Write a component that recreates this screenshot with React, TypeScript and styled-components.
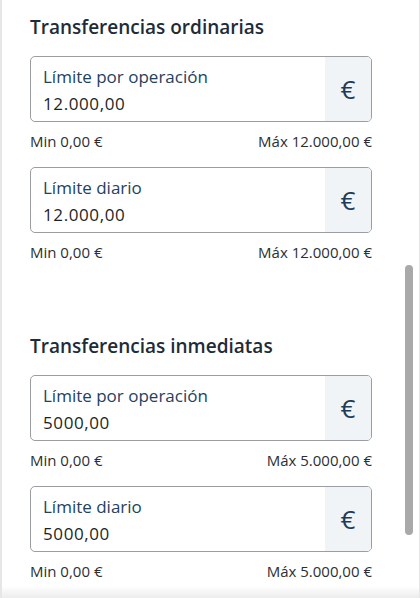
import React from "react";
import styled, { createGlobalStyle } from "styled-components";

const Global = createGlobalStyle`
  html, body { margin: 0; padding: 0; background: #ffffff; }
  body { font-family: "Open Sans", Roboto, sans-serif; }
  * { box-sizing: border-box; }
`;

const Frame = styled.div`
  position: relative;
  width: 420px;
  height: 598px;
  overflow: hidden;
  background: #ffffff;
  border-left: 2px solid #e4e6e8;
  border-right: 1px solid #e4e6e8;
`;

const Content = styled.div`
  display: flex;
  flex-direction: column;
  padding: 13px 0 0 28px;
  width: 370px;
`;

const Section = styled.section<{ $gap?: number }>`
  display: flex;
  flex-direction: column;
  margin-top: ${(p) => p.$gap ?? 0}px;
`;

const Heading = styled.h2`
  margin: 0 0 15px 0;
  font-size: 19px;
  line-height: 28px;
  font-weight: 600;
  color: #1e2b38;
`;

const Field = styled.div`
  display: flex;
  height: 66px;
  border: 1px solid #9a9ea3;
  border-radius: 5px;
  overflow: hidden;
`;

const FieldBody = styled.div`
  flex: 1;
  display: flex;
  flex-direction: column;
  justify-content: center;
  padding: 3px 0 0 12px;
  gap: 3px;
`;

const Label = styled.div`
  font-size: 17px;
  line-height: 24px;
  color: #234260;
`;

const Value = styled.div`
  font-size: 17px;
  line-height: 24px;
  letter-spacing: 0.6px;
  color: #1c1f23;
`;

const Currency = styled.div`
  width: 46px;
  display: flex;
  align-items: center;
  justify-content: center;
  background: #f0f4f7;
  font-size: 26px;
  font-weight: 400;
  color: #1f3b57;
`;

const Limits = styled.div`
  display: flex;
  justify-content: space-between;
  padding: 9px 0 0 0;
  height: 45px;
  font-size: 15px;
  line-height: 20px;
  color: #2b2f33;
`;

const Scrollbar = styled.div`
  position: absolute;
  right: 6px;
  top: 265px;
  width: 8px;
  height: 270px;
  border-radius: 4px;
  background: #a9a9a9;
`;

const Shade = styled.div`
  position: absolute;
  left: 0;
  right: 0;
  bottom: 0;
  height: 12px;
  background: linear-gradient(to bottom, rgba(240, 240, 240, 0), rgba(236, 236, 236, 1));
`;

type FieldData = { label: string; value: string; max: string };

const sections: { title: string; fields: FieldData[]; gap: number }[] = [
  {
    title: "Transferencias ordinarias",
    gap: 0,
    fields: [
      { label: "Límite por operación", value: "12.000,00", max: "Máx 12.000,00 €" },
      { label: "Límite diario", value: "12.000,00", max: "Máx 12.000,00 €" },
    ],
  },
  {
    title: "Transferencias inmediatas",
    gap: 54,
    fields: [
      { label: "Límite por operación", value: "5000,00", max: "Máx 5.000,00 €" },
      { label: "Límite diario", value: "5000,00", max: "Máx 5.000,00 €" },
    ],
  },
];

export default function App() {
  return (
    <>
      <Global />
      <Frame>
        <Content>
          {sections.map((s) => (
            <Section key={s.title} $gap={s.gap}>
              <Heading>{s.title}</Heading>
              {s.fields.map((f) => (
                <div key={f.label}>
                  <Field>
                    <FieldBody>
                      <Label>{f.label}</Label>
                      <Value>{f.value}</Value>
                    </FieldBody>
                    <Currency>€</Currency>
                  </Field>
                  <Limits>
                    <span>Min 0,00 €</span>
                    <span>{f.max}</span>
                  </Limits>
                </div>
              ))}
            </Section>
          ))}
        </Content>
        <Scrollbar />
        <Shade />
      </Frame>
    </>
  );
}
